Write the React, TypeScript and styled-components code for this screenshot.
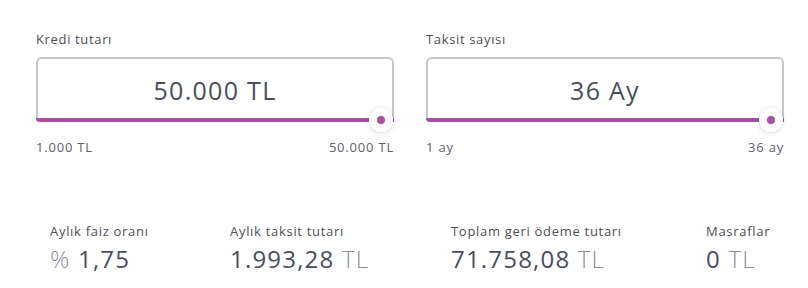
import React from "react";
import styled, { createGlobalStyle } from "styled-components";

const GlobalStyle = createGlobalStyle`
  body {
    margin: 0;
    background: #ffffff;
    font-family: "Open Sans", "Liberation Sans", sans-serif;
  }
`;

const Page = styled.main`
  width: 808px;
  height: 288px;
  box-sizing: border-box;
  padding: 29px 0 0 36px;
  overflow: hidden;
`;

const Sliders = styled.section`
  display: grid;
  grid-template-columns: 358px 358px;
  column-gap: 32px;
`;

const Field = styled.div`
  display: flex;
  flex-direction: column;
`;

const Label = styled.span`
  font-size: 13px;
  line-height: 20px;
  letter-spacing: 0.65px;
  color: #4d4f57;
  margin-bottom: 8px;
`;

const Box = styled.div`
  position: relative;
  height: 65px;
  box-sizing: border-box;
  border: 2px solid #c6c6c6;
  border-bottom: none;
  border-radius: 6px 6px 4px 4px;
  display: flex;
  flex-direction: column;
`;

const Value = styled.div`
  flex: 1;
  display: flex;
  align-items: center;
  justify-content: center;
  font-size: 25px;
  letter-spacing: 1.3px;
  color: #4a4e5c;
  padding-top: 2px;
`;

const Track = styled.div`
  height: 4px;
  margin: 0 -2px;
  background: #ae4ea6;
  border-radius: 0 0 0 4px;
`;

const Knob = styled.span`
  position: absolute;
  right: -1px;
  bottom: -10px;
  width: 24px;
  height: 24px;
  border-radius: 50%;
  background: #ffffff;
  box-shadow: 0 1px 5px rgba(0, 0, 0, 0.16);
  display: flex;
  align-items: center;
  justify-content: center;

  &::after {
    content: "";
    width: 8px;
    height: 8px;
    border-radius: 50%;
    background: #ae4ea6;
  }
`;

const Range = styled.div`
  display: flex;
  justify-content: space-between;
  font-size: 13px;
  line-height: 20px;
  color: #5f626b;
  margin-top: 15px;
  letter-spacing: 0.8px;
`;

const Summary = styled.section`
  display: grid;
  grid-template-columns: 180px 221px 255px auto;
  padding-left: 14px;
  margin-top: 64px;
`;

const Stat = styled.div`
  display: flex;
  flex-direction: column;
`;

const StatLabel = styled.span`
  font-size: 13px;
  line-height: 20px;
  letter-spacing: 0.7px;
  color: #4d4f57;
`;

const StatValue = styled.span`
  font-size: 24px;
  line-height: 30px;
  letter-spacing: 1.2px;
  color: #4a4e5c;
  margin-top: 3px;
`;

const Unit = styled.span`
  color: #8c9099;
  font-weight: 300;
`;

type SliderProps = { label: string; value: string; min: string; max: string };

const SliderField = ({ label, value, min, max }: SliderProps) => (
  <Field>
    <Label>{label}</Label>
    <Box>
      <Value>{value}</Value>
      <Track />
      <Knob />
    </Box>
    <Range>
      <span>{min}</span>
      <span>{max}</span>
    </Range>
  </Field>
);

const stats = [
  { label: "Aylık faiz oranı", prefix: "%", value: "1,75" },
  { label: "Aylık taksit tutarı", value: "1.993,28", suffix: "TL" },
  { label: "Toplam geri ödeme tutarı", value: "71.758,08", suffix: "TL" },
  { label: "Masraflar", value: "0", suffix: "TL" },
];

export default function App() {
  return (
    <>
      <GlobalStyle />
      <Page>
        <Sliders>
          <SliderField label="Kredi tutarı" value="50.000 TL" min="1.000 TL" max="50.000 TL" />
          <SliderField label="Taksit sayısı" value="36 Ay" min="1 ay" max="36 ay" />
        </Sliders>
        <Summary>
          {stats.map((s) => (
            <Stat key={s.label}>
              <StatLabel>{s.label}</StatLabel>
              <StatValue>
                {s.prefix && <Unit>{s.prefix} </Unit>}
                {s.value}
                {s.suffix && <Unit> {s.suffix}</Unit>}
              </StatValue>
            </Stat>
          ))}
        </Summary>
      </Page>
    </>
  );
}
